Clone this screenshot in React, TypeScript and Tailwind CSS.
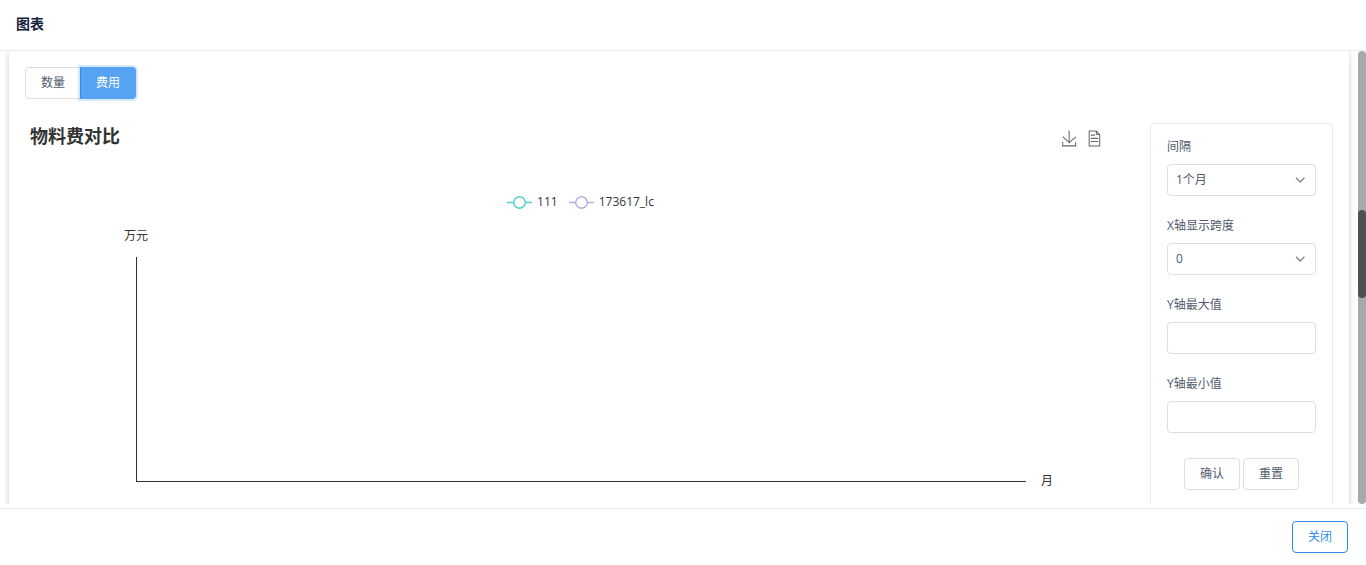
import { useState } from "react";
import type { ReactNode } from "react";

const fieldClass =
  "block h-8 w-full appearance-none rounded border border-[#dcdee2] bg-white px-2 text-xs text-[#515a6e] outline-none";
const buttonClass =
  "h-8 w-14 rounded border border-[#dcdee2] bg-white text-xs text-[#515a6e]";

function Field({ id, label, children }: { id: string; label: string; children: ReactNode }) {
  return (
    <div className="mb-[22px]">
      <label htmlFor={id} className="mb-[9px] block text-xs leading-4">
        {label}
      </label>
      {children}
    </div>
  );
}

function Select({ id, options }: { id: string; options: string[] }) {
  return (
    <div className="relative">
      <select id={id} className={fieldClass}>
        {options.map((o) => (
          <option key={o}>{o}</option>
        ))}
      </select>
      <svg
        className="pointer-events-none absolute top-2 right-2 size-4"
        viewBox="0 0 16 16"
        fill="none"
        stroke="#808695"
        strokeWidth="1.4"
        aria-hidden="true"
      >
        <path d="M4 5.8L8.2 10L12.4 5.8" />
      </svg>
    </div>
  );
}

function LegendItem({ name, color }: { name: string; color: string }) {
  return (
    <li className="flex items-center gap-[5px]">
      <svg width="25" height="14" viewBox="0 0 25 14" fill="none" stroke={color} strokeWidth="1.4" aria-hidden="true">
        <path d="M0 7.5H25" />
        <circle cx="12.5" cy="7.5" r="5.8" fill="#fff" />
      </svg>
      <span>{name}</span>
    </li>
  );
}

export default function App() {
  const [tab, setTab] = useState("费用");

  return (
    <div className="flex h-screen flex-col bg-white font-['Open_Sans','Noto_Sans_CJK_SC',sans-serif] text-xs text-[#515a6e]">
      <header className="border-b border-[#e8eaec] px-4 pt-[13px] pb-[15px]">
        <h1 className="text-sm leading-[22px] font-bold text-[#17233d]">图表</h1>
      </header>

      <main className="mb-1 flex min-h-0 flex-1 gap-[9px] overflow-hidden pl-[9px]">
        <section className="h-[640px] min-w-0 flex-1 rounded bg-white p-4 shadow-[0_1px_6px_rgba(0,0,0,0.2)]">
          <div className="flex">
            {["数量", "费用"].map((name) => (
              <button
                key={name}
                type="button"
                aria-pressed={tab === name}
                onClick={() => setTab(name)}
                className={
                  "h-8 w-14 border text-xs first:rounded-l last:-ml-px last:rounded-r " +
                  (tab === name
                    ? "border-[#57a3f3] border-l-[#2d8cf0] bg-[#57a3f3] text-white shadow-[0_0_0_2px_rgba(45,140,240,0.2)]"
                    : "border-[#dcdee2] bg-white text-[#515a6e]")
                }
              >
                {name}
              </button>
            ))}
          </div>

          <div className="mt-6 flex items-start">
            <div className="min-w-0 flex-1 text-[#333]">
              <div className="flex justify-between pr-[49px] pl-[5px]">
                <h2 className="text-lg leading-[26px] font-bold">物料费对比</h2>
                <div className="flex gap-[11px] pt-[7px]">
                  <button type="button" aria-label="保存为图片" className="h-4 w-[15px]">
                    <svg width="15" height="17" viewBox="2 -2 57 64" fill="none" stroke="#666" strokeWidth="3.9" aria-hidden="true">
                      <path d="M4.7,22.9L29.3,45.5L54.7,23.4M4.6,43.6L4.6,58L53.8,58L53.8,43.6M29.2,45.1L29.2,0" />
                    </svg>
                  </button>
                  <button type="button" aria-label="数据视图" className="h-4 w-[13px]">
                    <svg width="13" height="17" viewBox="7 -1 49 62" fill="none" stroke="#666" strokeWidth="3.9" aria-hidden="true">
                      <path d="M17.5,17.3H33M45.4,29.5h-28M11.5,2v56H51V14.8L38.4,2H11.5zM38.4,2.2v12.7H51M45.4,41.7h-28" />
                    </svg>
                  </button>
                </div>
              </div>

              <ul className="mt-[45px] flex justify-center gap-[11px] pr-[14px] leading-4">
                <LegendItem name="111" color="#4dcfcf" />
                <LegendItem name="173617_lc" color="#b9a8e6" />
              </ul>

              <div className="mt-[18px] pl-[99px] leading-4">万元</div>
              <div className="mt-[13px] flex items-end pr-[97px] pl-[111px]">
                <div className="h-[225px] flex-1 border-b border-l border-[#333]" />
                <span className="-mb-[7px] ml-[15px] leading-4">月</span>
              </div>
            </div>

            <form
              className="h-[440px] w-[183px] rounded border border-[#e8eaec] px-4 pt-[15px]"
              onSubmit={(e) => e.preventDefault()}
            >
              <Field id="interval" label="间隔">
                <Select id="interval" options={["1个月", "3个月", "6个月"]} />
              </Field>
              <Field id="span" label="X轴显示跨度">
                <Select id="span" options={["0", "1", "2"]} />
              </Field>
              <Field id="max" label="Y轴最大值">
                <input id="max" type="text" className={fieldClass} />
              </Field>
              <Field id="min" label="Y轴最小值">
                <input id="min" type="text" className={fieldClass} />
              </Field>
              <div className="flex justify-center gap-[3px] pt-[3px]">
                <button type="submit" className={buttonClass}>确认</button>
                <button type="reset" className={buttonClass}>重置</button>
              </div>
            </form>
          </div>
        </section>

        <div className="w-2 rounded bg-[#a8a8a8] pt-[159px]" aria-hidden="true">
          <div className="h-[88px] rounded bg-[#505050]" />
        </div>
      </main>

      <footer className="flex justify-end border-t border-[#e8eaec] px-[18px] py-3">
        <button type="button" className="h-8 w-14 rounded border border-[#2d8cf0] bg-white text-xs text-[#2d8cf0]">
          关闭
        </button>
      </footer>
    </div>
  );
}
